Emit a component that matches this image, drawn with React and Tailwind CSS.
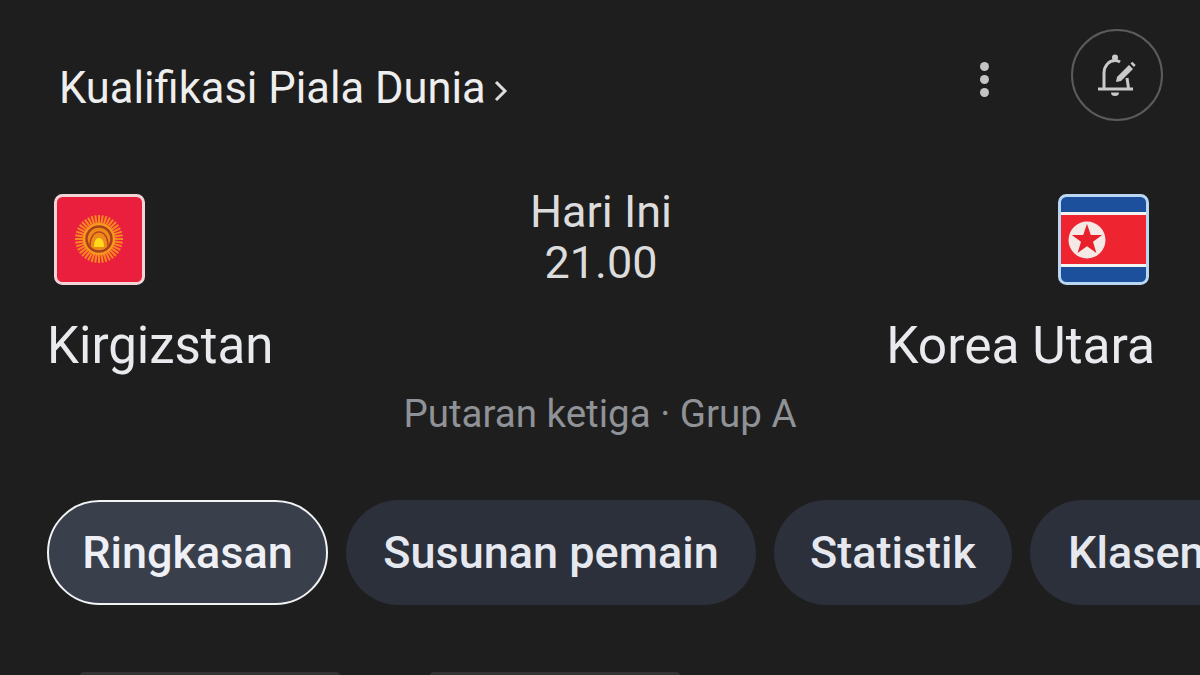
const FONT = { fontFamily: "Roboto, sans-serif" };

function KyrgyzFlag() {
  const rays = Array.from({ length: 40 }, (_, i) => (i * Math.PI * 2) / 40);
  return (
    <svg width="91" height="91" viewBox="0 0 91 91" className="block">
      <rect x="1.5" y="1.5" width="88" height="88" rx="7" fill="#ea1f3d" stroke="#f3d5d8" strokeWidth="3" />
      {rays.map((a) => (
        <line
          key={a}
          x1={45 + Math.cos(a) * 14}
          y1={45 + Math.sin(a) * 14}
          x2={45 + Math.cos(a) * 24}
          y2={45 + Math.sin(a) * 24}
          stroke="#f58a1f"
          strokeWidth="2"
        />
      ))}
      <circle cx="45" cy="45" r="16" fill="#f79a1d" />
      <circle cx="45" cy="45" r="12.5" fill="#ee8a1a" stroke="#a8411c" strokeWidth="2.5" />
      <path d="M36 52c0-9 4-14 9-14s9 5 9 14" fill="none" stroke="#b8431c" strokeWidth="1.5" />
      <path d="M40 53c0-6 2-9 5-9s5 3 5 9z" fill="#ffd91a" />
    </svg>
  );
}

function KoreaFlag() {
  return (
    <svg width="91" height="91" viewBox="0 0 91 91" className="block">
      <defs>
        <clipPath id="kp-clip">
          <rect x="1.5" y="1.5" width="88" height="88" rx="7" />
        </clipPath>
      </defs>
      <g clipPath="url(#kp-clip)">
        <rect x="0" y="0" width="91" height="91" fill="#1c4f9c" />
        <rect x="0" y="18" width="91" height="55" fill="#f3f3f3" />
        <rect x="0" y="21" width="91" height="49" fill="#ee2430" />
      </g>
      <circle cx="29" cy="46" r="18.5" fill="#f5e9e6" />
      <polygon
        points="29,30 32.8,41 44.2,41 35,47.8 38.4,59 29,52.2 19.6,59 23,47.8 13.8,41 25.2,41"
        fill="#e7202c"
      />
      <rect x="1.5" y="1.5" width="88" height="88" rx="7" fill="none" stroke="#b9d6f2" strokeWidth="3" />
    </svg>
  );
}

function BellEditIcon() {
  return (
    <svg width="38" height="45" viewBox="0 0 38 45" fill="none" stroke="#c9c9c9" strokeWidth="3">
      <path d="M0 36h35" />
      <path d="M6 35V20C6 13 11 7.5 17 7.5c2 0 3.5 .5 5 1.5" />
      <path d="M29 25l1.5 10" />
      <circle cx="17" cy="4.5" r="3" fill="#c9c9c9" stroke="none" />
      <path d="M13 39.5h8a4 3.5 0 0 1-8 0z" fill="#c9c9c9" stroke="none" />
      <path d="M19 24 31 12l4 4-12 12-5 1z" fill="#c9c9c9" stroke="none" />
      <path d="M32.5 10.5l1.8-1.8 3.4 3.4-1.8 1.8z" fill="#c9c9c9" stroke="none" />
    </svg>
  );
}

function Team({ name, flag, alignEnd, nameSize }) {
  return (
    <div className={alignEnd ? "flex flex-col items-end" : "flex flex-col items-start"}>
      <div className={alignEnd ? "mr-[6px]" : "ml-[7px]"}>{flag}</div>
      <p className={`mt-[33px] whitespace-nowrap leading-[56px] text-[#e8eaed] ${nameSize}`}>{name}</p>
    </div>
  );
}

const tabs = [
  { label: "Ringkasan", width: "w-[281px]", active: true },
  { label: "Susunan pemain", width: "w-[410px]" },
  { label: "Statistik", width: "w-[238px]" },
  { label: "Klasemen", width: "w-[276px]" },
];

export default function App() {
  return (
    <div
      className="flex h-[675px] w-[1200px] flex-col overflow-hidden bg-[#1e1e1e] text-[#e8eaed]"
      style={FONT}
    >
      <header className="flex items-start pl-[59px] pr-[37px] pt-[29px]">
        <h1 className="flex flex-1 items-center pt-[28px] text-[43.5px] leading-[64px] text-[#eeeeee]">
          Kualifikasi Piala Dunia
          <svg width="16" height="24" viewBox="0 0 16 24" className="ml-[7px] mt-[3px]" fill="none" stroke="#dddddd" strokeWidth="3">
            <path d="M3 3l9 9-9 9" />
          </svg>
        </h1>
        <div className="mr-[82px] mt-[33px] flex flex-col gap-[4px]">
          <span className="size-[9px] rounded-full bg-[#c4c4c4]" />
          <span className="size-[9px] rounded-full bg-[#c4c4c4]" />
          <span className="size-[9px] rounded-full bg-[#c4c4c4]" />
        </div>
        <button className="flex size-[92px] items-center justify-center rounded-full border-2 border-[#5b5b5b]">
          <BellEditIcon />
        </button>
      </header>

      <section className="mt-[73px] grid grid-cols-3 pl-[47px] pr-[45px]">
        <Team name="Kirgizstan" flag={<KyrgyzFlag />} nameSize="text-[51px]" />
        <div className="-mt-[8px] flex flex-col items-center text-[45px] leading-[51px] text-[#dcdcdc]">
          <span>Hari Ini</span>
          <span>21.00</span>
        </div>
        <Team name="Korea Utara" flag={<KoreaFlag />} nameSize="text-[51.5px]" alignEnd />
      </section>

      <p className="mt-[18px] text-center text-[38.5px] leading-[44px] text-[#8f9296]">
        Putaran ketiga · Grup A
      </p>

      <nav className="mt-[64px] flex gap-[18px] pl-[47px]">
        {tabs.map((tab) => (
          <div
            key={tab.label}
            className={
              tab.active
                ? `flex h-[105px] shrink-0 items-center justify-center rounded-full border-2 border-[#f1f3f4] bg-[#3a3f4c] text-[45px] font-medium text-[#eef0f6] ${tab.width}`
                : `flex h-[105px] shrink-0 items-center justify-center rounded-full bg-[#2c303a] text-[45px] font-medium text-[#e6e8f0] ${tab.width}`
            }
          >
            {tab.label}
          </div>
        ))}
      </nav>

      <div className="mt-[67px] flex gap-[90px] pl-[80px]">
        <div className="h-[4px] w-[260px] rounded-t-[4px] bg-[#333333]" />
        <div className="h-[4px] w-[250px] rounded-t-[4px] bg-[#333333]" />
      </div>
    </div>
  );
}
